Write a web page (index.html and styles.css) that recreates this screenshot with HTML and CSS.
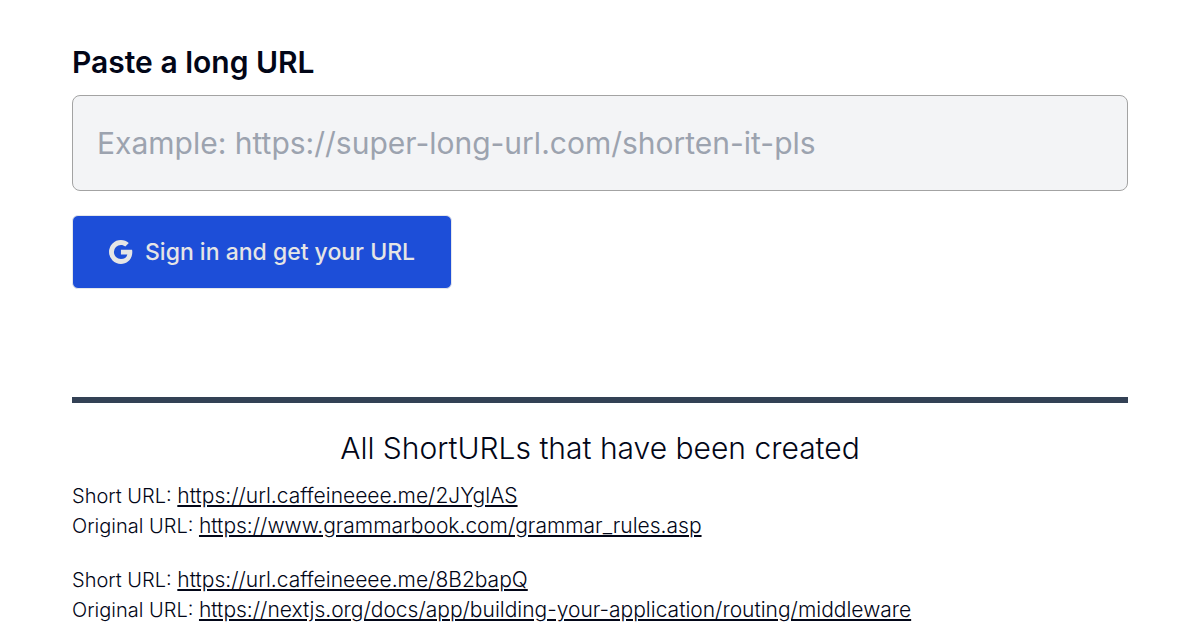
FILE: index.html
```html
<!DOCTYPE html>
<html lang="en">
<head>
<meta charset="utf-8">
<meta name="viewport" content="width=device-width, initial-scale=1">
<title>Short URL</title>
<link rel="stylesheet" href="styles.css">
</head>
<body>
<main class="page">
  <form class="shorten">
    <label class="shorten-label" for="long-url">Paste a long URL</label>
    <input class="shorten-input" id="long-url" type="url" placeholder="Example: https://super-long-url.com/shorten-it-pls">
    <button class="shorten-button" type="button">
      <svg class="google-icon" viewBox="3 3 18 18" aria-hidden="true"><path d="M20.283 10.356h-8.327v3.451h4.792c-.446 2.193-2.313 3.453-4.792 3.453a5.27 5.27 0 0 1-5.279-5.28 5.27 5.27 0 0 1 5.279-5.279c1.259 0 2.397.447 3.29 1.178l2.6-2.599c-1.584-1.381-3.615-2.233-5.89-2.233a8.908 8.908 0 0 0-8.934 8.934 8.907 8.907 0 0 0 8.934 8.934c4.467 0 8.529-3.249 8.529-8.934 0-.528-.081-1.097-.202-1.625z"/></svg>
      <span>Sign in and get your URL</span>
    </button>
  </form>
  <hr class="divider">
  <section class="history">
    <h2 class="history-title">All ShortURLs that have been created</h2>
    <ul class="url-list">
      <li>
        <p class="url-line">Short URL: <a class="url-link" href="https://url.caffeineeee.me/2JYglAS">https://url.caffeineeee.me/2JYglAS</a></p>
        <p class="url-line">Original URL: <a class="url-link" href="https://www.grammarbook.com/grammar_rules.asp">https://www.grammarbook.com/grammar_rules.asp</a></p>
      </li>
      <li>
        <p class="url-line">Short URL: <a class="url-link" href="https://url.caffeineeee.me/8B2bapQ">https://url.caffeineeee.me/8B2bapQ</a></p>
        <p class="url-line">Original URL: <a class="url-link" href="https://nextjs.org/docs/app/building-your-application/routing/middleware">https://nextjs.org/docs/app/building-your-application/routing/middleware</a></p>
      </li>
    </ul>
  </section>
</main>
</body>
</html>
```
FILE: styles.css
```css
* {
  box-sizing: border-box;
}

body {
  margin: 0;
  background: #fff;
  color: #020617;
  font-family: Inter, "Open Sans", sans-serif;
  font-weight: 300;
}

.page {
  padding: 44px 72px 16px;
}

.shorten {
  display: flex;
  flex-direction: column;
  align-items: flex-start;
}

.shorten-label {
  margin-bottom: 15px;
  font-size: 30px;
  font-weight: 600;
  line-height: 36px;
}

.shorten-input {
  width: 100%;
  padding: 24px;
  border: 1px solid #a3a3a3;
  border-radius: 8px;
  background: #f3f4f6;
  color: inherit;
  font-family: inherit;
  font-size: 30px;
  font-weight: 400;
  line-height: 46px;
}

.shorten-input::placeholder {
  color: #9ca3af;
  opacity: 1;
}

.shorten-button {
  display: flex;
  align-items: center;
  gap: 12px;
  margin-top: 24px;
  padding: 18px 36px;
  border: 1px solid #e5e7eb;
  border-radius: 6px;
  background: #1d4ed8;
  color: #e5e5e5;
  font-family: inherit;
  font-size: 23px;
  font-weight: 500;
  line-height: 36px;
}

.google-icon {
  width: 24px;
  height: 24px;
  fill: currentColor;
}

.divider {
  margin: 108px 0 27px;
  border: 0;
  border-top: 6px solid #334155;
}

.history-title {
  margin: 0 0 15px;
  font-size: 30px;
  font-weight: 300;
  line-height: 36px;
  text-align: center;
}

.url-list {
  display: flex;
  flex-direction: column;
  gap: 24px;
  margin: 0;
  padding: 0;
  list-style: none;
}

.url-line {
  margin: 0;
  font-size: 20px;
  line-height: 30px;
  overflow-wrap: anywhere;
}

.url-link {
  color: inherit;
  font-size: 21px;
  text-decoration: underline;
  text-decoration-thickness: 2px;
  text-underline-offset: 2px;
}
```
